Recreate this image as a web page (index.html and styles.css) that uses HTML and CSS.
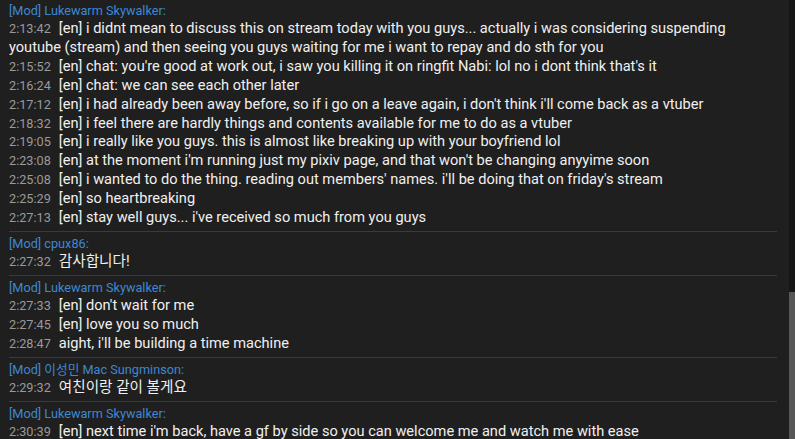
FILE: index.html
```html
<!DOCTYPE html>
<html>
<head>
<meta charset="utf-8">
<link rel="stylesheet" href="styles.css">
</head>
<body>
<div class="window">
  <div class="chat">
    <div class="group first">
      <div class="name">[Mod] Lukewarm Skywalker:</div>
      <div class="msg"><span class="ts">2:13:42</span>[en] i didnt mean to discuss this on stream today with you guys... actually i was considering suspending youtube (stream) and then seeing you guys waiting for me i want to repay and do sth for you</div>
      <div class="msg"><span class="ts">2:15:52</span>[en] chat: you're good at work out, i saw you killing it on ringfit Nabi: lol no i dont think that's it</div>
      <div class="msg"><span class="ts">2:16:24</span>[en] chat: we can see each other later</div>
      <div class="msg"><span class="ts">2:17:12</span>[en] i had already been away before, so if i go on a leave again, i don't think i'll come back as a vtuber</div>
      <div class="msg"><span class="ts">2:18:32</span>[en] i feel there are hardly things and contents available for me to do as a vtuber</div>
      <div class="msg"><span class="ts">2:19:05</span>[en] i really like you guys. this is almost like breaking up with your boyfriend lol</div>
      <div class="msg"><span class="ts">2:23:08</span>[en] at the moment i'm running just my pixiv page, and that won't be changing anyyime soon</div>
      <div class="msg"><span class="ts">2:25:08</span>[en] i wanted to do the thing. reading out members' names. i'll be doing that on friday's stream</div>
      <div class="msg"><span class="ts">2:25:29</span>[en] so heartbreaking</div>
      <div class="msg"><span class="ts">2:27:13</span>[en] stay well guys... i've received so much from you guys</div>
    </div>
    <div class="group">
      <div class="name">[Mod] cpux86:</div>
      <div class="msg"><span class="ts">2:27:32</span>감사합니다!</div>
    </div>
    <div class="group">
      <div class="name">[Mod] Lukewarm Skywalker:</div>
      <div class="msg"><span class="ts">2:27:33</span>[en] don't wait for me</div>
      <div class="msg"><span class="ts">2:27:45</span>[en] love you so much</div>
      <div class="msg"><span class="ts">2:28:47</span>aight, i'll be building a time machine</div>
    </div>
    <div class="group">
      <div class="name">[Mod] 이성민 Mac Sungminson:</div>
      <div class="msg"><span class="ts">2:29:32</span>여친이랑 같이 볼게요</div>
    </div>
    <div class="group">
      <div class="name">[Mod] Lukewarm Skywalker:</div>
      <div class="msg"><span class="ts">2:30:39</span>[en] next time i'm back, have a gf by side so you can welcome me and watch me with ease</div>
    </div>
  </div>
  <div class="scrollbar">
    <div class="track"></div>
    <div class="thumb"></div>
  </div>
</div>
</body>
</html>
```
FILE: styles.css
```css
html, body {
  margin: 0;
  padding: 0;
  background: #1f1f1f;
  height: 100%;
  overflow: hidden;
}
.window {
  display: flex;
  height: 439px;
  font-family: Roboto, "Noto Sans CJK KR", sans-serif;
}
.chat {
  flex: 1;
  padding: 0 12px 0 9px;
  overflow: hidden;
}
.group {
  padding: 4px 0 4px;
  border-bottom: 1px solid #3a3a3a;
}
.group.first {
  padding-top: 3px;
}
.name {
  color: #3d88d2;
  font-size: 12.7px;
  line-height: 16px;
}
.msg {
  color: #f0f0f0;
  font-size: 14.6px;
  line-height: 18.9px;
}
.ts {
  color: #9a9a9a;
  font-size: 12.7px;
  line-height: 1;
  margin-right: 8px;
}
.scrollbar {
  width: 6px;
  display: flex;
  flex-direction: column;
}
.track {
  height: 292px;
  background: #161616;
}
.thumb {
  flex: 1;
  background: #575757;
}
```
